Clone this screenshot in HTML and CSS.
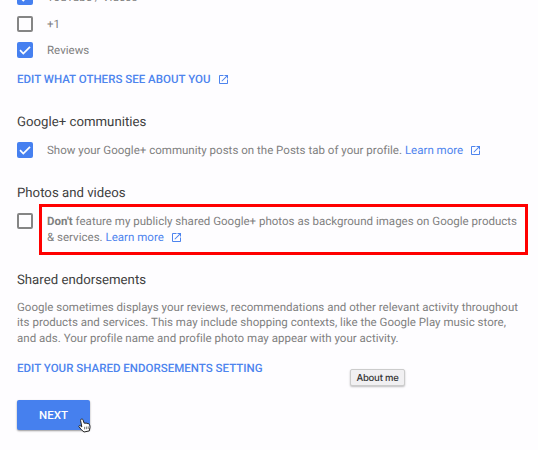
FILE: index.html
```html
<!DOCTYPE html>
<html lang="en">

<head>
    <meta charset="UTF-8" />
    <meta name="viewport" content="width=device-width, initial-scale=1.0" />
    <title>Profile settings</title>
    <link rel="stylesheet" href="styles.css">
</head>

<body>
    <svg class="symbols" aria-hidden="true">
        <symbol id="open-icon" viewBox="3 3 18 18">
            <path d="M19 19H5V5h7V3H5a2 2 0 0 0-2 2v14a2 2 0 0 0 2 2h14c1.1 0 2-.9 2-2v-7h-2v7zM14 3v2h3.59l-9.83 9.83 1.41 1.41L19 6.41V10h2V3h-7z" />
        </symbol>
        <symbol id="check-icon" viewBox="0 0 16 16">
            <path d="M3 8.2l3.3 3.3L13 4.8" fill="none" stroke="#fff" stroke-width="1.7" />
        </symbol>
    </svg>

    <main class="settings">
        <div class="option">
            <span class="box checked"><svg><use href="#check-icon" /></svg></span>
            <p>YouTube / Videos</p>
        </div>
        <div class="option">
            <span class="box"></span>
            <p>+1</p>
        </div>
        <div class="option">
            <span class="box checked"><svg><use href="#check-icon" /></svg></span>
            <p>Reviews</p>
        </div>
        <a class="action others">EDIT WHAT OTHERS SEE ABOUT YOU<svg class="open"><use href="#open-icon" /></svg></a>

        <h2>Google+ communities</h2>
        <div class="option communities">
            <span class="box checked"><svg><use href="#check-icon" /></svg></span>
            <p>Show your Google+ community posts on the Posts tab of your profile. <a>Learn more<svg class="open"><use href="#open-icon" /></svg></a></p>
        </div>

        <h2>Photos and videos</h2>
        <div class="option photos">
            <span class="box"></span>
            <div class="highlight">
                <p><b>Don't</b> feature my publicly shared Google+ photos as background images on Google products<br>&amp; services. <a>Learn more<svg class="open"><use href="#open-icon" /></svg></a></p>
            </div>
        </div>

        <h2 class="shared">Shared endorsements</h2>
        <p class="about">Google sometimes displays your reviews, recommendations and other relevant activity throughout<br>its products and services. This may include shopping contexts, like the Google Play music store,<br>and ads. Your profile name and profile photo may appear with your activity.</p>
        <a class="action endorsements">EDIT YOUR SHARED ENDORSEMENTS SETTING</a>

        <button class="next">NEXT
            <svg class="pointer" viewBox="0 0 13 15">
                <path d="M3.2 1.2c.9-.5 1.6 0 1.9.9l1.1 3.2.8-.5 1 .7.9-.5 1 .8 1-.1c.7.5 1.1 2 1.1 3.6l-.7 3.6-5.3 1.1-2.8-2.4L.9 8.5c-.2-.9.9-1.4 1.7-.6l1.2 1L2.6 2.6c-.1-.7.1-1.1.6-1.4z" />
                <path class="fingers" d="M6.6 8.8v2.6M8.4 8.6v2.6M10.2 8.4V11" />
            </svg>
        </button>
    </main>
    <div class="tooltip">About me</div>
</body>

</html>
```

FILE: styles.css
```css
* {
    padding: 0;
    margin: 0;
    box-sizing: border-box;
}

body {
    height: 450px;
    overflow: hidden;
    background-color: #fefdff;
    color: #808080;
    font-family: Roboto, sans-serif;
    font-size: 11.5px;
    line-height: 16px;
    letter-spacing: 0.015px;
    text-rendering: geometricPrecision;
    white-space: nowrap;
}

.symbols {
    display: none;
}

.settings {
    display: flex;
    flex-direction: column;
    align-items: flex-start;
    margin-top: -11px;
    padding-left: 17px;
}

.option {
    display: flex;
    align-items: center;
    height: 16px;
    margin-bottom: 10.5px;
}

.option > p {
    margin-left: 14px;
}

.box {
    flex: none;
    width: 16px;
    height: 16px;
    border: 2px solid #858585;
    border-radius: 2px;
}

.box.checked {
    border: none;
    background-color: #4680f0;
}

.box svg {
    display: block;
    width: 16px;
    height: 16px;
}

a {
    color: #4d84ee;
}

.open {
    width: 9px;
    height: 9px;
    margin-left: 8px;
    vertical-align: -1px;
    fill: currentColor;
}

.action {
    font-weight: 500;
}

.others {
    margin-top: 2px;
}

h2 {
    margin-top: 27.5px;
    color: #404040;
    font-size: 13.2px;
    font-weight: 400;
    line-height: 18px;
}

.communities {
    margin-top: 9.5px;
    margin-bottom: 0;
}

/* the box lines up with the first line of the highlighted text */
.photos {
    align-items: flex-start;
    height: 52px;
    margin: 0.5px 0 0;
}

.photos .box {
    margin-top: 9px;
}

.highlight {
    width: 489px;
    height: 51px;
    margin-left: 6px;
    padding: 6px 5px;
    border: 3px solid #f00;
}

.shared {
    margin-top: 16.5px;
}

.about {
    margin-top: 9.5px;
    line-height: 15.8px;
}

.endorsements {
    margin-top: 13px;
}

.next {
    position: relative;
    width: 73px;
    height: 30px;
    margin-top: 24px;
    border: none;
    border-radius: 2px;
    background-color: #4680ee;
    box-shadow: 0 1px 2px rgba(0, 0, 0, 0.4);
    color: #fff;
    font-family: inherit;
    font-size: 11.5px;
    font-weight: 500;
}

.pointer {
    position: absolute;
    top: 18px;
    left: 61px;
    width: 13px;
    height: 15px;
    fill: #fff;
    stroke: #222;
    stroke-width: 1;
}

.fingers {
    stroke-width: 0.6;
}

.tooltip {
    position: absolute;
    top: 369px;
    left: 350px;
    width: 55px;
    height: 17px;
    border: 1px solid #ccc;
    border-radius: 2px;
    background-color: #f1f0f2;
    box-shadow: 0 1px 2px rgba(0, 0, 0, 0.25);
    color: #333;
    font-family: Inter, sans-serif;
    font-size: 9.5px;
    font-weight: 500;
    letter-spacing: -0.2px;
    line-height: 17px;
    text-align: center;
}
```
